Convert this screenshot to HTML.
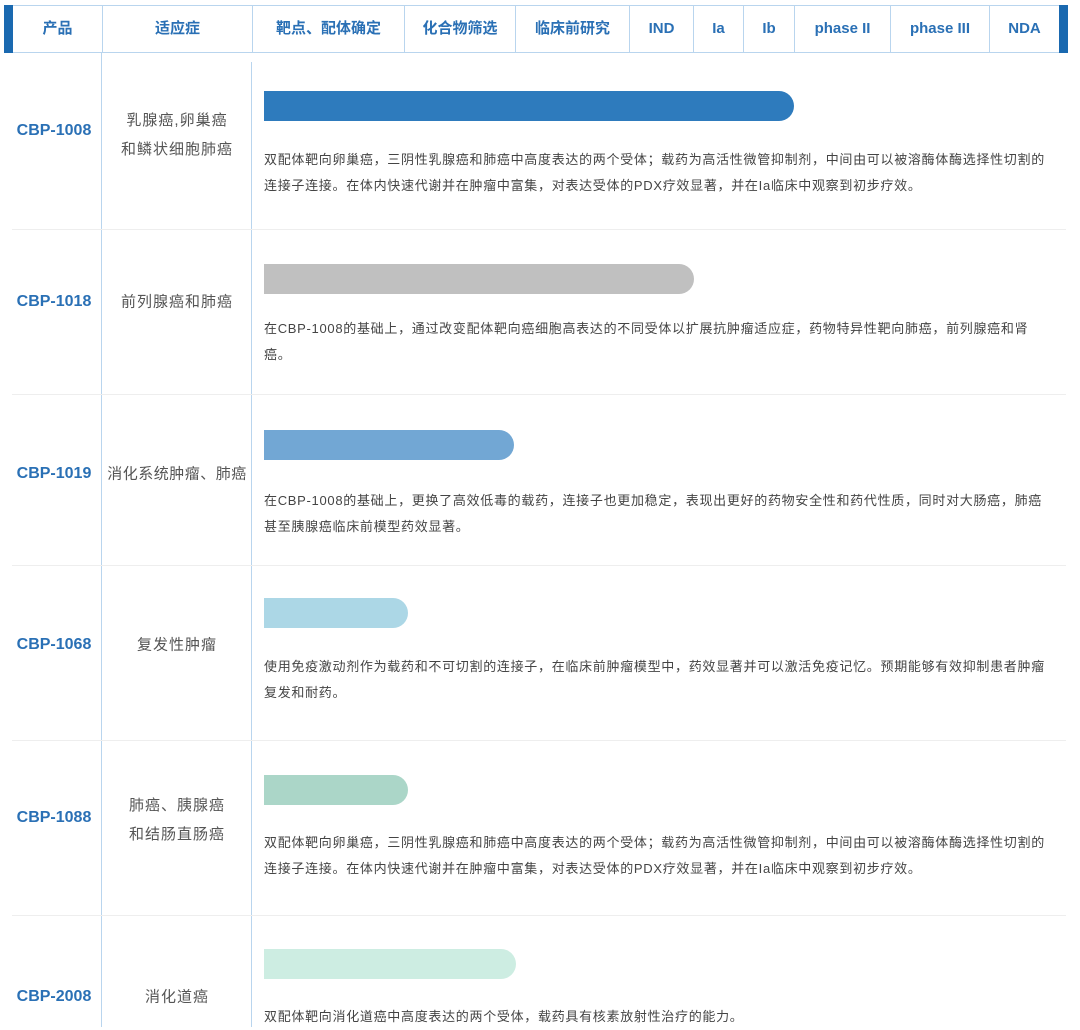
<!DOCTYPE html><html><head><meta charset="utf-8"><style>
body{margin:0;width:1080px;height:1027px;background:#fff;position:relative;overflow:hidden;font-family:"Liberation Sans","Noto Sans CJK SC",sans-serif}
.a{position:absolute}
.hd{position:absolute;top:5px;height:48px;left:4px;width:1064px;border-top:1px solid #b9d5ee;border-bottom:1px solid #b9d5ee;box-sizing:border-box}
.hc{position:absolute;top:5px;height:48px;line-height:48px;text-align:center;color:#2a70b5;font-weight:bold;font-size:15px;border-left:1px solid #b9d5ee;box-sizing:border-box}
.p{position:absolute;left:0;width:108px;text-align:center;color:#2a70b5;font-weight:bold;font-size:16px;transform:translateY(-50%)}
.i{position:absolute;left:102px;width:150px;text-align:center;color:#555;font-size:15px;line-height:29px;letter-spacing:1px;transform:translateY(-50%)}
.d{position:absolute;left:264px;width:800px;color:#444;font-size:13px;line-height:26px;letter-spacing:0.7px;white-space:nowrap}
.b{position:absolute;left:264px;height:30px;border-radius:0 15px 15px 0}
.r{position:absolute;left:12px;width:1054px;height:1px;background:#eeeeee}
</style></head><body>
<div class="hd"></div>
<div class="a" style="left:4px;top:5px;width:9px;height:48px;background:#1a69b0"></div>
<div class="a" style="left:1059px;top:5px;width:9px;height:48px;background:#1a69b0"></div>
<div class="hc" style="left:13px;width:89px;border-left:none">产品</div>
<div class="hc" style="left:102px;width:150px">适应症</div>
<div class="hc" style="left:252px;width:152px">靶点、配体确定</div>
<div class="hc" style="left:404px;width:111px">化合物筛选</div>
<div class="hc" style="left:515px;width:114px">临床前研究</div>
<div class="hc" style="left:629px;width:64px">IND</div>
<div class="hc" style="left:693px;width:50px">Ia</div>
<div class="hc" style="left:743px;width:51px">Ib</div>
<div class="hc" style="left:794px;width:96px">phase II</div>
<div class="hc" style="left:890px;width:99px">phase III</div>
<div class="hc" style="left:989px;width:70px">NDA</div>
<div class="a" style="left:101px;top:53px;width:1px;height:974px;background:#b9d5ee"></div>
<div class="a" style="left:251px;top:62px;width:1px;height:965px;background:#b9d5ee"></div>
<div class="r" style="top:229px"></div><div class="r" style="top:394px"></div><div class="r" style="top:565px"></div><div class="r" style="top:740px"></div><div class="r" style="top:915px"></div>

<div class="p" style="top:131px">CBP-1008</div>
<div class="i" style="top:135px">乳腺癌,卵巢癌<br>和鳞状细胞肺癌</div>
<div class="b" style="top:91px;width:530px;background:#2e7bbd"></div>
<div class="d" style="top:147px">双配体靶向卵巢癌，三阴性乳腺癌和肺癌中高度表达的两个受体；载药为高活性微管抑制剂，中间由可以被溶酶体酶选择性切割的<br>连接子连接。在体内快速代谢并在肿瘤中富集，对表达受体的PDX疗效显著，并在Ia临床中观察到初步疗效。</div>

<div class="p" style="top:302px">CBP-1018</div>
<div class="i" style="top:302px">前列腺癌和肺癌</div>
<div class="b" style="top:264px;width:430px;background:#c0c0c0"></div>
<div class="d" style="top:316px">在CBP-1008的基础上，通过改变配体靶向癌细胞高表达的不同受体以扩展抗肿瘤适应症，药物特异性靶向肺癌，前列腺癌和肾<br>癌。</div>

<div class="p" style="top:474px">CBP-1019</div>
<div class="i" style="top:474px;letter-spacing:0.5px">消化系统肿瘤、肺癌</div>
<div class="b" style="top:430px;width:250px;background:#72a7d4"></div>
<div class="d" style="top:488px">在CBP-1008的基础上，更换了高效低毒的载药，连接子也更加稳定，表现出更好的药物安全性和药代性质，同时对大肠癌，肺癌<br>甚至胰腺癌临床前模型药效显著。</div>

<div class="p" style="top:645px">CBP-1068</div>
<div class="i" style="top:645px">复发性肿瘤</div>
<div class="b" style="top:598px;width:144px;background:#acd7e6"></div>
<div class="d" style="top:654px">使用免疫激动剂作为载药和不可切割的连接子，在临床前肿瘤模型中，药效显著并可以激活免疫记忆。预期能够有效抑制患者肿瘤<br>复发和耐药。</div>

<div class="p" style="top:818px">CBP-1088</div>
<div class="i" style="top:820px">肺癌、胰腺癌<br>和结肠直肠癌</div>
<div class="b" style="top:775px;width:144px;background:#abd6c8"></div>
<div class="d" style="top:830px">双配体靶向卵巢癌，三阴性乳腺癌和肺癌中高度表达的两个受体；载药为高活性微管抑制剂，中间由可以被溶酶体酶选择性切割的<br>连接子连接。在体内快速代谢并在肿瘤中富集，对表达受体的PDX疗效显著，并在Ia临床中观察到初步疗效。</div>

<div class="p" style="top:997px">CBP-2008</div>
<div class="i" style="top:997px">消化道癌</div>
<div class="b" style="top:949px;width:252px;background:#cdede2"></div>
<div class="d" style="top:1004px">双配体靶向消化道癌中高度表达的两个受体，载药具有核素放射性治疗的能力。</div>
</body></html>
